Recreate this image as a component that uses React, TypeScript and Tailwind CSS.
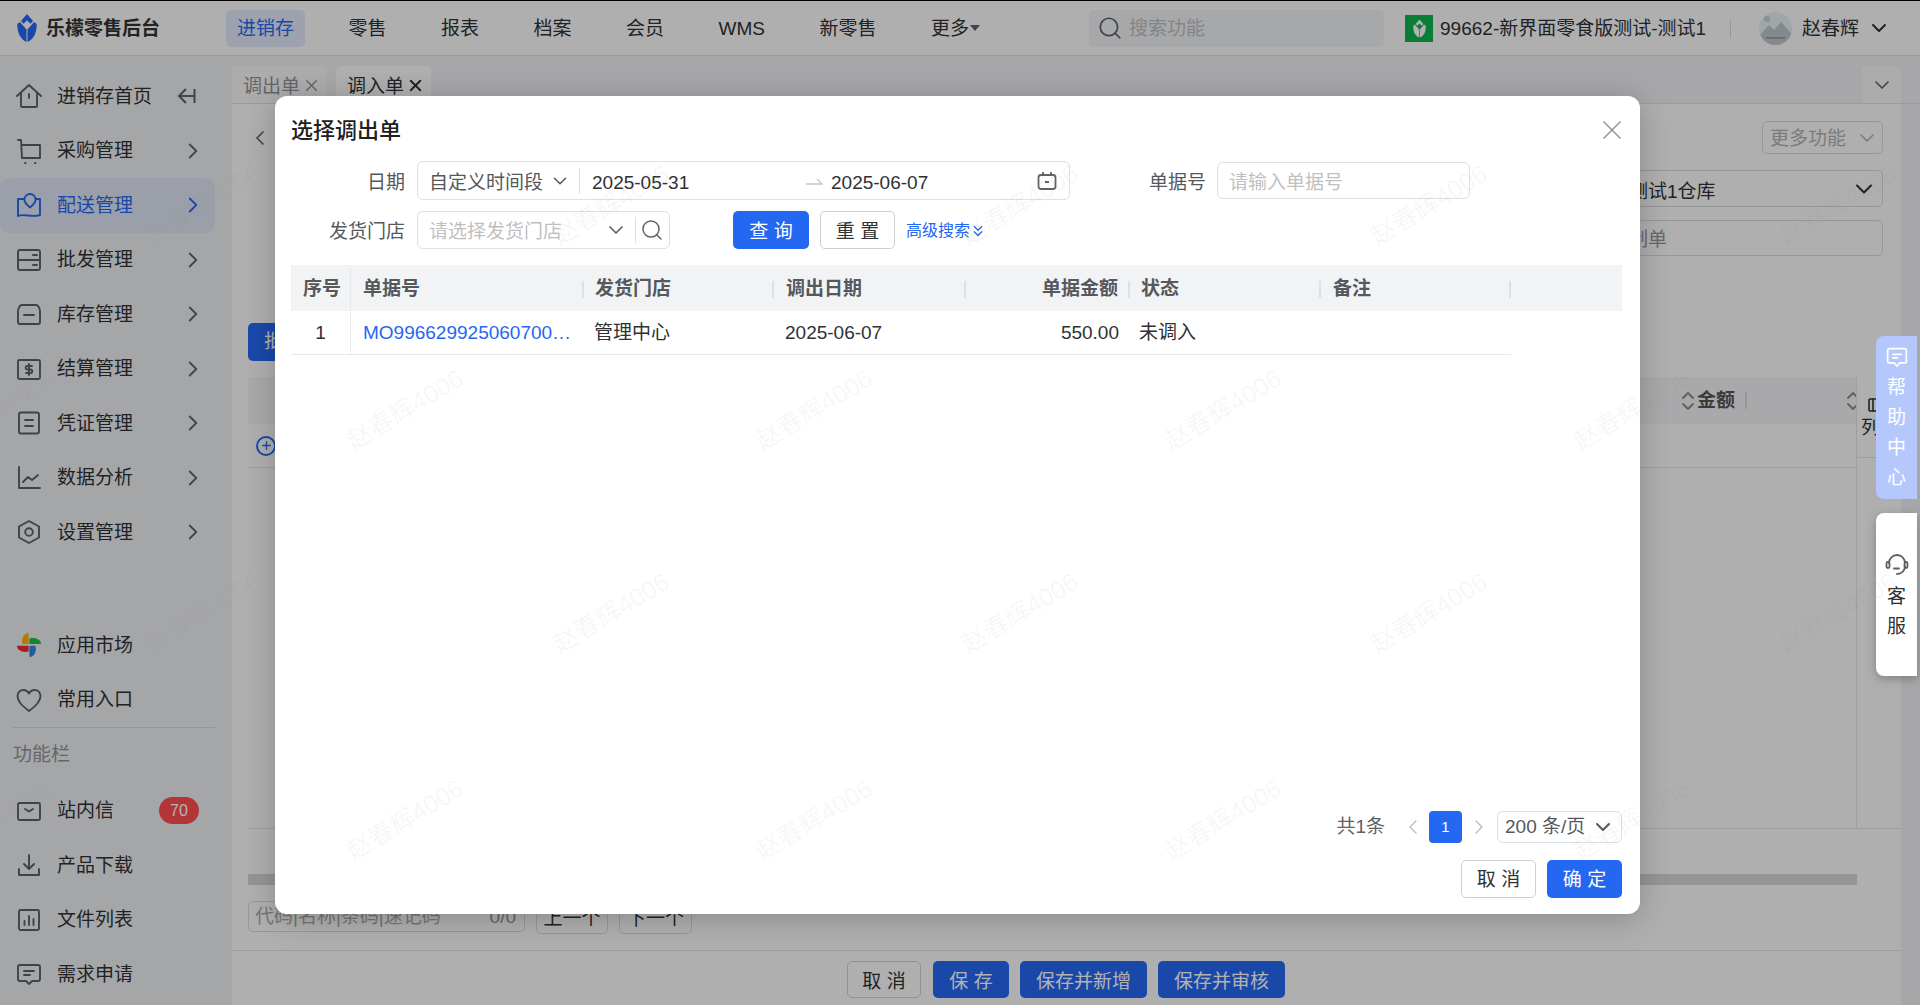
import React from "react";
import { ChevronDown, ChevronLeft, ChevronRight, ChevronsDown, ChevronsUpDown, Search, X, Columns3, Plus } from "lucide-react";

const FONT = "font-['Liberation_Sans','Noto_Sans_CJK_SC',sans-serif]";

function Logo({ main, h = 28, w = 20 }: { main: string; w?: number; h?: number }) {
  return (
    <svg width={w} height={h} viewBox="0 0 20 28" fill={main}>
      <path d="M10 0 L16 7 L13.4 9.8 L10 6.2 L6.6 9.8 L4 7 Z" />
      <path d="M0.3 10 L3 8 L9.5 15.5 L9.5 28 C4 25.5 0.3 20 0.3 10 Z" />
      <path d="M19.7 10 L17 8 L10.5 15.5 L10.5 28 C16 25.5 19.7 20 19.7 10 Z" />
    </svg>
  );
}

function Ico({ children }: { children: React.ReactNode }) {
  return (
    <svg width="26" height="26" viewBox="0 0 26 26" fill="none" stroke="currentColor" strokeWidth="1.9" strokeLinecap="round" strokeLinejoin="round" className="shrink-0">
      {children}
    </svg>
  );
}

const icons: Record<string, React.ReactNode> = {
  home: <Ico><path d="M1 13 L13 2 L25 13" /><path d="M5 10 V23 a1 1 0 0 0 1 1 H20 a1 1 0 0 0 1-1 V10" /><path d="M13 11 V15" /></Ico>,
  cart: <Ico><path d="M2 2 H5 L6 20 H24 V7 H6" /><path d="M9 25 h.5 M19 25 h.5" /></Ico>,
  map: <Ico><path d="M8 7 H2 V24 C9 21 15 26 24 23 V7 H20" /><path d="M14 2 a5.6 5.6 0 0 1 5.6 5.6 C19.6 11 14 15.5 14 15.5 C14 15.5 8.4 11 8.4 7.6 A5.6 5.6 0 0 1 14 2 Z" /></Ico>,
  drawer: <Ico><rect x="2" y="3" width="22" height="20" rx="2" /><path d="M2 13 H24 M17 8 H21 M17 18 H21" /></Ico>,
  box: <Ico><path d="M6 4 H20 C22 4 24 7 24 11 V21 a2 2 0 0 1-2 2 H4 a2 2 0 0 1-2-2 V11 C2 7 4 4 6 4 Z" /><path d="M8 14 H18" /></Ico>,
  bill: <Ico><rect x="2" y="4" width="22" height="19" rx="1.5" /><path d="M13 8 V19 M16 10 H11.5 a1.7 1.7 0 0 0 0 3.5 H14.5 a1.7 1.7 0 0 1 0 3.5 H10" /></Ico>,
  doc: <Ico><rect x="3" y="2.5" width="20" height="21" rx="2" /><path d="M9 10 H17 M9 16 H17" /></Ico>,
  chart: <Ico><path d="M3 2 V23 H24" /><path d="M7 17 L12 12 L16 15 L22 10" /></Ico>,
  hex: <Ico><path d="M13 2 L23 7.5 V18.5 L13 24 L3 18.5 V7.5 Z" /><circle cx="13" cy="13" r="3.8" /></Ico>,
  heart: <Ico><path d="M13 24 C6 18.5 1.5 14.5 1.5 9 C1.5 5.5 4.2 3 7.3 3 C9.6 3 11.8 4.2 13 6.5 C14.2 4.2 16.4 3 18.7 3 C21.8 3 24.5 5.5 24.5 9 C24.5 14.5 20 18.5 13 24 Z" /></Ico>,
  mail: <Ico><rect x="2" y="5" width="22" height="17" rx="1.5" /><path d="M9 11 L13 13.5 L17 11" /></Ico>,
  down: <Ico><path d="M13 3 V17 M8 12 L13 17 L18 12 M3 17 V23 H23 V17" /></Ico>,
  bars: <Ico><rect x="3" y="3" width="20" height="20" rx="1.5" /><path d="M8.5 18 V14 M13 18 V9 M17.5 18 V12" /></Ico>,
  msg: <Ico><path d="M4 4 H22 a2 2 0 0 1 2 2 V18 a2 2 0 0 1-2 2 H16 L13 23 L10 20 H4 a2 2 0 0 1-2-2 V6 a2 2 0 0 1 2-2 Z" /><path d="M8 10 H18 M8 14 H14" /></Ico>,
  apps: (
    <svg width="26" height="26" viewBox="0 0 26 26" className="shrink-0">
      <path d="M12.6 12 V1 C8 1 5 6 6.5 12 Z" fill="#ffb000" />
      <path d="M13.4 12 H25 C25 8 20 5 13.4 6.5 Z" fill="#1fc04a" />
      <path d="M12.6 13.8 H1 C1 18 6 21 12.6 19.5 Z" fill="#f02c2c" />
      <path d="M13.4 13.8 V25 C18 25 21 20 19.5 13.8 Z" fill="#2f86ea" />
    </svg>
  ),
};

function NavRow({ icon, label, active, arrow = true, h = "h-[54.5px]", badge, extra }: { icon: string; label: string; active?: boolean; arrow?: boolean; h?: string; badge?: string; extra?: React.ReactNode }) {
  return (
    <div className={`flex ${h} w-[215px] shrink-0 items-center rounded-[10px] pl-[16px] pr-[9px] ${active ? "bg-[#dfe4f2] text-[#2468f2]" : "text-[#5c5f68]"}`}>
      {icons[icon]}
      <span className={`ml-[15px] text-[19px] leading-none ${active ? "text-[#2468f2]" : "text-[#303133]"}`}>{label}</span>
      <span className="flex-1" />
      {arrow && <ChevronRight size={26} strokeWidth={1.7} className={active ? "text-[#2468f2]" : "text-[#606266]"} />}
      {extra}
      {badge && <span className="mr-[7px] flex h-[27px] w-[40px] items-center justify-center rounded-full bg-[#ff4d4f] text-[16px] text-white">{badge}</span>}
    </div>
  );
}

function Sidebar() {
  return (
    <aside className="flex h-full w-[232px] shrink-0 flex-col bg-[#edeef1] pt-[13px]">
      <NavRow
        icon="home"
        label="进销存首页"
        arrow={false}
        extra={
          <svg width="20" height="16" viewBox="0 0 20 16" fill="none" stroke="#606266" strokeWidth="2" className="mr-[9px]">
            <path d="M9 1 L2 8 L9 15 M2 8 H17 M17.5 1 V15" />
          </svg>
        }
      />
      <NavRow icon="cart" label="采购管理" />
      <NavRow icon="map" label="配送管理" active />
      <NavRow icon="drawer" label="批发管理" />
      <NavRow icon="box" label="库存管理" />
      <NavRow icon="bill" label="结算管理" />
      <NavRow icon="doc" label="凭证管理" />
      <NavRow icon="chart" label="数据分析" />
      <NavRow icon="hex" label="设置管理" />
      <div className="h-[58px] shrink-0" />
      <NavRow icon="apps" label="应用市场" arrow={false} h="h-[55px]" />
      <NavRow icon="heart" label="常用入口" arrow={false} h="h-[54px]" />
      <div className="ml-[13px] h-px w-[202px] shrink-0 bg-[#d5d6da]" />
      <div className="flex h-[56px] shrink-0 items-center pl-[13px] text-[19px] text-[#909399]">功能栏</div>
      <NavRow icon="mail" label="站内信" arrow={false} badge="70" />
      <NavRow icon="down" label="产品下载" arrow={false} />
      <NavRow icon="bars" label="文件列表" arrow={false} />
      <NavRow icon="msg" label="需求申请" arrow={false} />
    </aside>
  );
}

function Header() {
  const items = ["进销存", "零售", "报表", "档案", "会员", "WMS", "新零售"];
  return (
    <header className="flex h-[56px] shrink-0 items-center border-t border-b border-t-black border-b-[#dcdcdc] bg-[#fbfbfb] text-[19px] text-[#303133]">
      <div className="ml-[17px] flex w-[209px] items-center">
        <Logo main="#2468f2" />
        <span className="ml-[9px] pt-[3px] text-[19px] font-bold text-[#333]">乐檬零售后台</span>
      </div>
      <nav className="flex items-center gap-[32.5px]">
        {items.map((t, i) => (
          <div key={t} className={`flex h-[37px] items-center rounded-[5px] px-[11px] pt-[3px] ${i === 0 ? "bg-[#e3e9f9] text-[#2468f2]" : ""}`}>{t}</div>
        ))}
        <div className="flex h-[37px] items-center px-[11px]">
          <span className="pt-[3px]">更多</span>
          <svg width="10" height="6" viewBox="0 0 10 6" className="ml-[1px]"><path d="M0 0 H10 L5 6 Z" fill="#606266" /></svg>
        </div>
      </nav>
      <div className="ml-[98px] flex h-[37px] w-[295px] items-center rounded-[5px] bg-[#f0f1f3] pl-[8px] text-[#bcbec2]">
        <Search size={26} strokeWidth={1.6} className="text-[#606266]" />
        <span className="ml-[6px] pt-[3px]">搜索功能</span>
      </div>
      <div className="ml-[21px] flex h-[27px] w-[28px] items-center justify-center bg-[#0eb24e]">
        <Logo main="#ffffff" w={13} h={19} />
      </div>
      <span className="ml-[7px] w-[266px] whitespace-nowrap pt-[3px]">99662-新界面零食版测试-测试1</span>
      <div className="ml-[24px] h-[19px] w-px bg-[#d9d9d9]" />
      <svg width="33" height="33" viewBox="0 0 33 33" className="ml-[28px]">
        <defs><clipPath id="av"><circle cx="16.5" cy="16.5" r="16.5" /></clipPath></defs>
        <g clipPath="url(#av)">
          <rect width="33" height="33" fill="#e6f0f0" />
          <circle cx="8" cy="7" r="3" fill="#c5cfd2" />
          <path d="M0 24 L10 13 L15 18 L22 10 L33 22 V33 H0 Z" fill="#bcc6ca" />
          <rect x="7" y="25" width="19" height="2" fill="#93a0a6" />
        </g>
      </svg>
      <span className="ml-[10px] pt-[3px]">赵春辉</span>
      <ChevronDown size={24} strokeWidth={2} className="ml-[8px] text-[#303133]" />
    </header>
  );
}

function Tabs() {
  return (
    <div className="flex h-[48px] shrink-0 items-end border-b border-[#e0e0e0] pr-[19px] text-[19px]">
      <div className="flex h-[37px] w-[94px] items-center rounded-t-[5px] bg-[#f6f6f7] pl-[11px] text-[#909399]">
        <span className="pt-[6px]">调出单</span><X size={19} strokeWidth={1.8} className="ml-[2px] mt-[2px]" />
      </div>
      <div className="ml-[10px] flex h-[37px] w-[95px] items-center rounded-t-[5px] bg-[#fbfbfb] pl-[11px] text-[#303133]">
        <span className="pt-[6px]">调入单</span><X size={19} strokeWidth={2.4} className="ml-[2px] mt-[2px]" />
      </div>
      <span className="flex-1" />
      <div className="flex h-[37px] w-[39px] items-center justify-center rounded-t-[5px] bg-[#f6f6f7]">
        <ChevronDown size={24} strokeWidth={1.6} className="text-[#606266]" />
      </div>
    </div>
  );
}

function Panel() {
  return (
    <div className="flex flex-1 flex-col bg-[#fbfbfb] mr-[19px] min-h-0 text-[19px] text-[#303133]">
      <div className="flex-1 min-h-0 px-[16px] pr-[18px]">
        <div className="flex h-[33px] mt-[17px] items-center justify-between">
          <ChevronLeft size={24} strokeWidth={1.7} className="text-[#606266]" />
          <div className="flex h-[33px] w-[121px] items-center justify-between rounded-[5px] border border-[#d9d9d9] pl-[7px] pr-[3px] text-[#b0b0b0]">
            <span className="pt-[4px]">更多功能</span><ChevronDown size={24} strokeWidth={1.5} />
          </div>
        </div>
        <div className="mt-[16px] flex justify-end">
          <div className="flex h-[37px] w-[267px] items-center justify-between rounded-[5px] border border-[#d9d9d9] pl-[12px] pr-[4px]">
            <span className="pt-[7px]">测试1仓库</span><ChevronDown size={28} strokeWidth={1.8} />
          </div>
        </div>
        <div className="mt-[13px] flex justify-end">
          <div className="flex h-[36px] w-[267px] items-center rounded-[5px] border border-[#d9d9d9] pl-[12px] pt-[4px] text-[#909399]">制单</div>
        </div>
        <div className="mt-[67px] flex h-[38px] w-[120px] items-center rounded-[5px] bg-[#2468f2] pl-[16px] text-white">批量导入</div>
        <div className="mt-[16px] flex w-[1653px] flex-col">
          <div className="flex h-[81px] w-full items-stretch">
            <div className="flex-1">
              <div className="flex h-[47px] items-center justify-end bg-[#f2f3f5] font-bold text-[#555]">
                <ChevronsUpDown size={24} strokeWidth={1.8} className="text-[#888]" />
                <span className="ml-[-3px] pt-[2px]">金额</span>
                <span className="ml-[10px] h-[17px] w-[2px] bg-[#dcdcdc]" />
                <span className="w-[94px]" />
                <ChevronsUpDown size={24} strokeWidth={1.8} className="mr-[-9px] text-[#888]" />
              </div>
              <div className="flex h-[44px] items-center border-b border-[#e3e3e3] pl-[8px]">
                <span className="flex h-[20px] w-[20px] items-center justify-center rounded-full border-2 border-[#2468f2] text-[#2468f2]">
                  <Plus size={13} strokeWidth={2.5} />
                </span>
              </div>
            </div>
            <div className="z-[1] flex h-[81px] w-[45px] flex-col border-l border-b border-[#e3e3e3] bg-[#fbfbfb] pl-[4px] pt-[20px]">
              <Columns3 size={16} strokeWidth={2.4} className="ml-[6px] text-[#303133]" />
              <span className="mt-[4px] leading-[22px]">列</span>
            </div>
          </div>
          <div className="flex h-[371px] w-full">
            <div className="h-[371px] flex-1 border-b border-[#e3e3e3]" />
            <div className="h-[371px] w-[45px] border-l border-b border-[#e3e3e3]" />
          </div>
          <div className="flex h-[56px] items-end">
            <div className="h-[11px] w-[1609px] bg-[#d6d6d6]" />
          </div>
        </div>
        <div className="mt-[16px] flex items-start">
          <div className="flex h-[31px] w-[277px] items-center justify-between rounded-[5px] border border-[#d9d9d9] pl-[6px] pr-[8px] pt-[2px] text-[#a8a8a8]">
            代码|名称|条码|速记码<span className="text-[#909399]">0/0</span>
          </div>
          <div className="ml-[11px] flex h-[33px] w-[72px] items-center justify-center rounded-[5px] border border-[#d9d9d9] pt-[3px]">上一个</div>
          <div className="ml-[11px] flex h-[33px] w-[73px] items-center justify-center rounded-[5px] border border-[#d9d9d9] pt-[3px]">下一个</div>
        </div>
      </div>
      <div className="flex h-[55px] shrink-0 items-start gap-[11px] border-t border-[#e0e0e0] pl-[615px] pt-[10px]">
        <div className="flex h-[37px] w-[74px] items-center justify-center whitespace-pre rounded-[5px] border border-[#d0d0d0] pt-[6px]">取 消</div>
        <div className="ml-[1px] flex h-[37px] w-[76px] items-center justify-center whitespace-pre rounded-[5px] bg-[#2468f2] pt-[6px] text-white">保 存</div>
        <div className="flex h-[37px] w-[127px] items-center justify-center rounded-[5px] bg-[#2468f2] pt-[6px] text-white">保存并新增</div>
        <div className="flex h-[37px] w-[127px] items-center justify-center rounded-[5px] bg-[#2468f2] pt-[6px] text-white">保存并审核</div>
      </div>
    </div>
  );
}

function HeadCell({ label, right, pl = "pl-[12px]" }: { label: string; right?: boolean; pl?: string }) {
  return (
    <div className={`flex h-full items-center ${right ? "justify-end" : `justify-between ${pl}`}`}>
      <span>{label}</span>
      <span className={`h-[17px] w-[2px] bg-[#dfe0e2] ${right ? "ml-[10px]" : ""}`} />
    </div>
  );
}

function Modal() {
  const cols = "grid-cols-[60px_233px_190px_192px_164px_191px_190px]";
  return (
    <div className="absolute inset-0 z-10 bg-black/30 pl-[275px] pt-[96px]">
      <div className="flex h-[818px] w-[1365px] flex-col rounded-[12px] bg-white pl-[16px] pr-[18px] pb-[16px] pt-[17px] text-[19px] text-[#303133] shadow-[0_4px_30px_rgba(0,0,0,0.22)]">
        <div className="flex h-[34px] items-center justify-between">
          <span className="text-[22px] font-medium text-[#1f2022]">选择调出单</span>
          <svg width="20" height="20" viewBox="0 0 20 20" fill="none" stroke="#8f8f8f" strokeWidth="1.4"><path d="M1.5 1.5 L18.5 18.5 M18.5 1.5 L1.5 18.5" /></svg>
        </div>
        <div className="mt-[14px] flex h-[39px] items-center">
          <span className="w-[126px] pr-[12px] pt-[6px] text-right text-[#55585c]">日期</span>
          <div className="flex h-[39px] w-[653px] items-center rounded-[6px] border border-[#dcdfe6] pl-[11px]">
            <span className="pt-[6px] text-[#55585c]">自定义时间段</span>
            <ChevronDown size={22} strokeWidth={1.7} className="ml-[6px] text-[#55585c]" />
            <span className="ml-[8px] h-[26px] w-px bg-[#dcdfe6]" />
            <span className="ml-[12px] w-[214px] pt-[6px]">2025-05-31</span>
            <svg width="17" height="8" viewBox="0 0 17 8" fill="none" stroke="#c4c6ca" strokeWidth="1.3"><path d="M0 7 H16 L11 2" /></svg>
            <span className="ml-[8px] pt-[6px]">2025-06-07</span>
            <span className="flex-1" />
            <svg width="20" height="20" viewBox="0 0 20 20" fill="none" stroke="#606266" strokeWidth="1.8" className="mr-[12px]">
              <rect x="1.5" y="4" width="17" height="14" rx="2.5" />
              <path d="M6 1 V4 M14 1 V4 M8 11 H12" />
            </svg>
          </div>
          <span className="ml-[79px] pt-[6px] text-[#55585c]">单据号</span>
          <div className="ml-[11px] flex h-[37px] w-[253px] items-center rounded-[6px] border border-[#dcdfe6] pl-[11px] pt-[6px] text-[#bfbfbf]">请输入单据号</div>
        </div>
        <div className="mt-[11px] flex h-[38px] items-center">
          <span className="w-[126px] pr-[12px] pt-[4px] text-right text-[#55585c]">发货门店</span>
          <div className="flex h-[38px] w-[253px] items-center rounded-[6px] border border-[#dcdfe6] pl-[11px] text-[#bfbfbf]">
            <span className="pt-[4px]">请选择发货门店</span>
            <ChevronDown size={24} strokeWidth={1.7} className="ml-[42px] text-[#606266]" />
            <span className="ml-[7px] h-[26px] w-px bg-[#dcdfe6]" />
            <Search size={24} strokeWidth={1.5} className="ml-[4px] text-[#606266]" />
          </div>
          <div className="ml-[63px] flex h-[38px] w-[76px] items-center justify-center whitespace-pre rounded-[5px] bg-[#2468f2] pt-[4px] text-white">查 询</div>
          <div className="ml-[11px] flex h-[38px] w-[75px] items-center justify-center whitespace-pre rounded-[5px] border border-[#cfcfcf] pt-[4px]">重 置</div>
          <span className="ml-[11px] flex items-center pt-[2px] text-[16px] text-[#2468f2]">高级搜索<ChevronsDown size={18} strokeWidth={1.8} className="ml-[-1px]" /></span>
        </div>
        <div className="mt-[16px] h-[46px] w-[1331px] bg-[#f2f3f5] font-bold text-[#55585c]">
          <div className={`grid h-full pt-[3px] ${cols}`}>
            <div className="flex h-full items-center justify-between border-r border-[#e6e7ea] pl-[12px]">序号</div>
            <HeadCell label="单据号" />
            <HeadCell label="发货门店" pl="pl-[11px]" />
            <HeadCell label="调出日期" />
            <HeadCell label="单据金额" right />
            <HeadCell label="状态" pl="pl-[11px]" />
            <HeadCell label="备注" />
          </div>
        </div>
        <div className={`grid h-[44px] w-[1220px] items-stretch border-b border-[#e8e8e8] pt-[1px] ${cols}`}>
          <div className="flex items-center justify-center border-r border-[#eeeeee]">1</div>
          <div className="flex min-w-0 items-center pl-[12px] pr-[12px] text-[#2468f2]"><span className="truncate">MO99662992506070001</span></div>
          <div className="flex items-center pl-[10px]">管理中心</div>
          <div className="flex items-center pl-[11px]">2025-06-07</div>
          <div className="flex items-center justify-end pr-[11px]">550.00</div>
          <div className="flex items-center pl-[9px]">未调入</div>
          <div />
        </div>
        <div className="flex-1" />
        <div className="flex h-[32px] items-center justify-end">
          <span className="text-[#606266]">共1条</span>
          <ChevronLeft size={24} strokeWidth={1.2} className="ml-[16px] text-[#b8b8b8]" />
          <span className="ml-[4px] flex h-[32px] w-[33px] items-center justify-center rounded-[4px] bg-[#2468f2] text-[15px] text-white">1</span>
          <ChevronRight size={24} strokeWidth={1.2} className="ml-[5px] text-[#b8b8b8]" />
          <div className="ml-[6px] flex h-[32px] w-[125px] items-center justify-between rounded-[6px] border border-[#dcdfe6] pl-[7px] pr-[6px] text-[#55585c]">
            200 条/页<ChevronDown size={24} strokeWidth={2} />
          </div>
        </div>
        <div className="mt-[17px] flex justify-end gap-[11px]">
          <div className="flex h-[38px] w-[75px] items-center justify-center whitespace-pre rounded-[5px] border border-[#cfcfcf] pt-[2px]">取 消</div>
          <div className="flex h-[38px] w-[75px] items-center justify-center whitespace-pre rounded-[5px] bg-[#2468f2] pt-[2px] text-white">确 定</div>
        </div>
      </div>
    </div>
  );
}

function Floats() {
  return (
    <div className="absolute right-[3px] top-[336px] z-20 flex w-[41px] flex-col gap-[14px] text-[19px]">
      <div className="flex h-[163px] flex-col items-center rounded-l-[8px] bg-[#b5c8fd] pt-[10px] text-white">
        <svg width="22" height="22" viewBox="0 0 26 26" fill="none" stroke="currentColor" strokeWidth="2" strokeLinejoin="round" strokeLinecap="round">
          <path d="M4 3 H22 a2 2 0 0 1 2 2 V18 a2 2 0 0 1-2 2 H16 L13 24 L10 20 H4 a2 2 0 0 1-2-2 V5 a2 2 0 0 1 2-2 Z" />
          <path d="M8 10 H18 M8 14 H14" />
        </svg>
        <div className="mt-[5px] flex flex-col items-center leading-[30px]"><span>帮</span><span>助</span><span>中</span><span>心</span></div>
      </div>
      <div className="flex h-[163px] flex-col items-center justify-center rounded-l-[8px] bg-white pt-[5px] text-[#303133] shadow-[0_3px_10px_rgba(0,0,0,0.25)]">
        <svg width="24" height="24" viewBox="0 0 24 24" fill="none" stroke="#5c5f68" strokeWidth="1.8" strokeLinecap="round">
          <path d="M4 11 a8 8 0 0 1 16 0 M20 14 C20 19 16 22 12 22" />
          <rect x="1.5" y="10" width="3" height="6" rx="1.5" />
          <rect x="19.5" y="10" width="3" height="6" rx="1.5" />
          <path d="M9 16.5 H14" />
        </svg>
        <div className="mt-[6px] flex flex-col items-center leading-[30px]"><span>客</span><span>服</span></div>
      </div>
    </div>
  );
}

const marks: { x: number; y: number }[] = [];
[205, 410, 613, 820].forEach((y, r) => {
  for (let i = 0; i < 5; i++) marks.push({ x: (r % 2 === 0 ? 202 : -4) + i * 409, y });
});

function Watermarks() {
  return (
    <div className="pointer-events-none absolute inset-0 z-30 overflow-hidden">
      {marks.map((m) => (
        <span
          key={`${m.x}-${m.y}`}
          className="absolute -translate-x-1/2 -translate-y-1/2 -rotate-[31deg] whitespace-nowrap text-[25px] text-[#888888]/[0.08]"
          style={{ left: m.x, top: m.y }}
        >
          赵春辉4006
        </span>
      ))}
    </div>
  );
}

export default function App() {
  return (
    <div className={`relative h-[1005px] w-[1920px] overflow-hidden bg-[#eff0f3] ${FONT}`}>
      <div className="flex h-full flex-col">
        <Header />
        <div className="flex min-h-0 flex-1">
          <Sidebar />
          <main className="flex min-w-0 flex-1 flex-col">
            <Tabs />
            <Panel />
          </main>
        </div>
      </div>
      <Modal />
      <Floats />
      <Watermarks />
    </div>
  );
}
